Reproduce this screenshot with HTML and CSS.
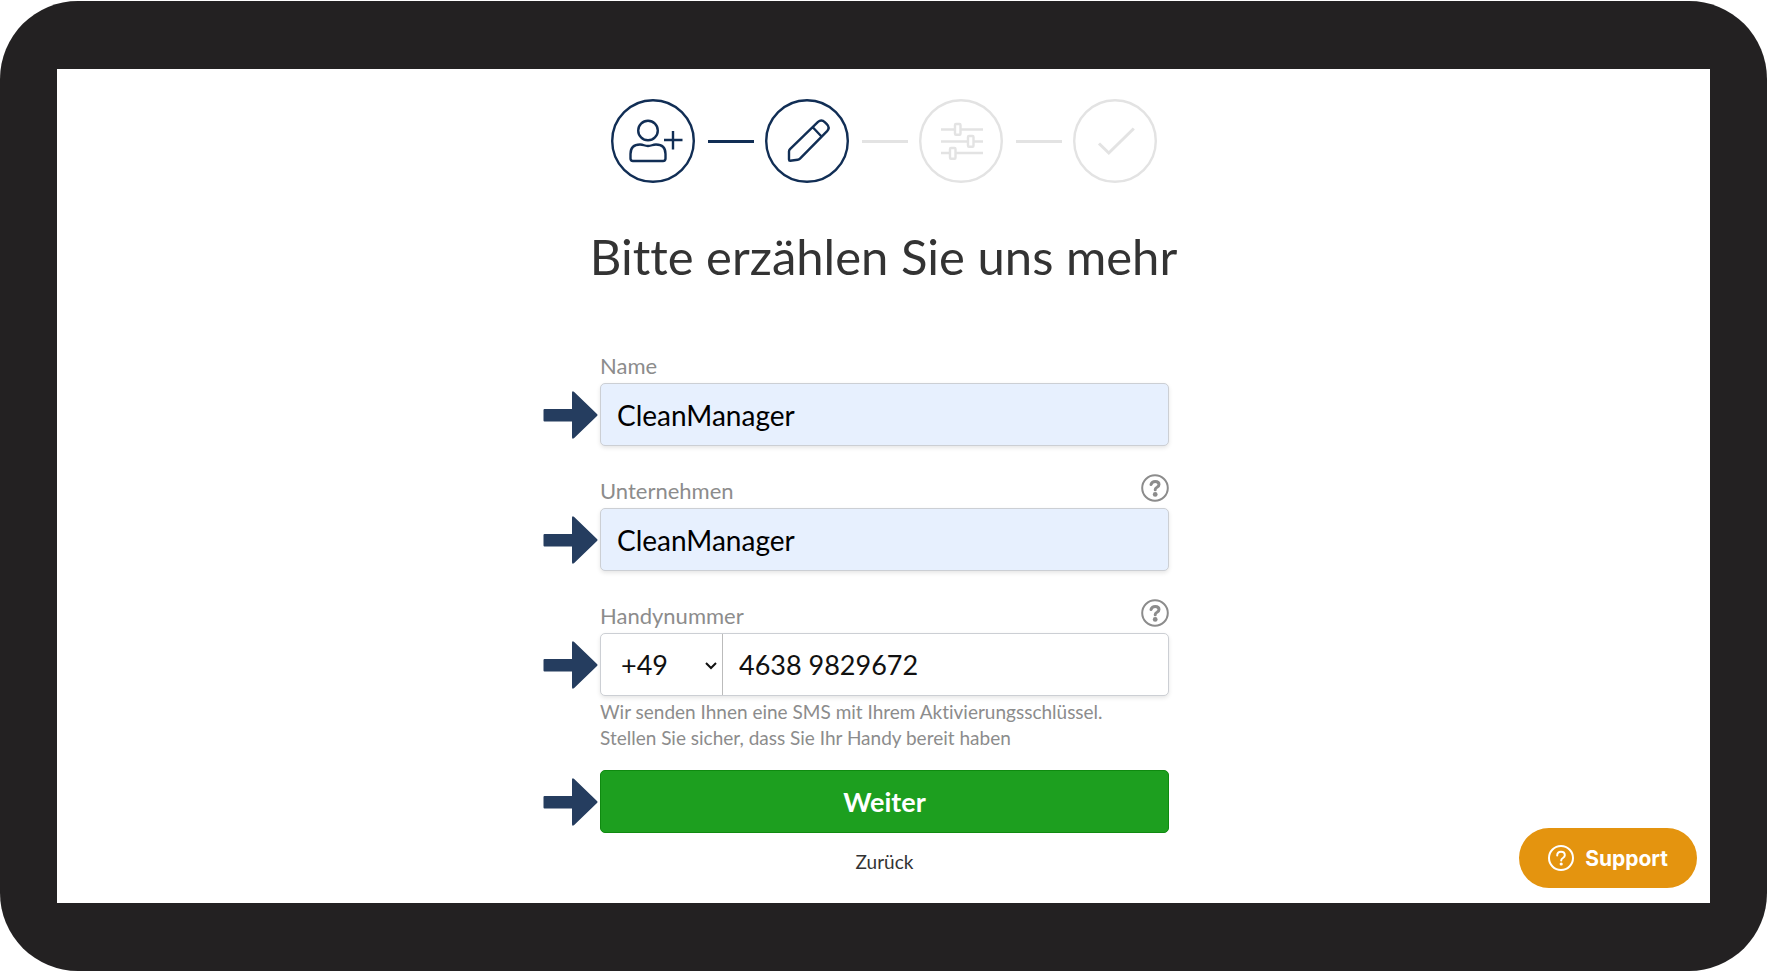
FILE: index.html
```html
<!DOCTYPE html>
<html lang="de">
<head>
    <meta charset="UTF-8">
    <meta name="viewport" content="width=device-width, initial-scale=1.0">
    <title>CleanManager</title>
    <link rel="stylesheet" href="styles.css">
</head>
<body>
    <div class="device">
        <main class="screen">
            <!-- Progress steps -->
            <ol class="steps">
                <li class="step done">
                    <svg viewBox="0 0 84 84" stroke-width="2.4" aria-hidden="true">
                        <circle cx="42" cy="42" r="40.800"/>
                        <circle cx="37" cy="31.500" r="9.800"/>
                        <path d="M22 62q-2.500 0-2.500-2.500v-4.500q0-9.500 9.500-9.500c4 0 4 1.500 8 1.500s4-1.500 8-1.500q9.500 0 9.500 9.500v4.500q0 2.500-2.500 2.500z"/>
                        <path d="M62 32v18.500M53 41h18.500"/>
                    </svg>
                </li>
                <li class="line done"></li>
                <li class="step done">
                    <svg viewBox="0 0 84 84" stroke-width="2.4" aria-hidden="true">
                        <circle cx="42" cy="42" r="40.800"/>
                        <path d="M24 60.500v-8q0-1.300 1-2.300L53 22.800q3.500-3 7 .5l1.800 1.800q3.500 3.500.3 7L35 59.700q-1 1-2.300 1.100l-7.500 1q-1.200 0-1.200-1.300zM48 28.500l8.500 9"/>
                    </svg>
                </li>
                <li class="line"></li>
                <li class="step">
                    <svg viewBox="0 0 84 84" stroke-width="2.4" aria-hidden="true">
                        <circle cx="42" cy="42" r="40.800"/>
                        <path d="M22 30.500h14M42 30.500h22M22 42.500h27M55 42.500h9M22 54h8.500M36.500 54h27.500"/>
                        <rect x="36" y="25" width="5.500" height="10.800" rx="1"/>
                        <rect x="49" y="37" width="5.500" height="10.800" rx="1"/>
                        <rect x="31" y="49" width="5.500" height="10.800" rx="1"/>
                    </svg>
                </li>
                <li class="line"></li>
                <li class="step">
                    <svg viewBox="0 0 84 84" stroke-width="2.4" aria-hidden="true">
                        <circle cx="42" cy="42" r="40.800"/>
                        <path class="check" d="M26 44.500l9.800 9.500 25-24.500"/>
                    </svg>
                </li>
            </ol>

            <h1>Bitte erzählen Sie uns mehr</h1>

            <form class="signup">
                <div class="label-row">
                    <label for="name">Name</label>
                </div>
                <svg class="arrow" viewBox="0 0 55 48" aria-hidden="true"><path d="M1.500 18h27.500V2q0-3 2.200-1L54 23q1 1 0 2L31.200 47q-2.200 2-2.200-1V30.500H1.500q-1 0-1-1V19q0-1 1-1z"/></svg>
                <input class="field filled" type="text" id="name" value="CleanManager">

                <div class="label-row">
                    <label for="company">Unternehmen</label>
                    <button class="help" type="button" aria-label="Hilfe zu Unternehmen">
                        <svg viewBox="0 0 28 28" aria-hidden="true"><circle cx="14" cy="14" r="12.800"/><path d="M10 10.500q1-3 4.200-3 3.800 0 3.800 3 0 1.600-2 2.800-1.800 1-1.800 2.400"/><circle class="dot" cx="14.200" cy="20.400" r="2.400"/></svg>
                    </button>
                </div>
                <svg class="arrow" viewBox="0 0 55 48" aria-hidden="true"><path d="M1.500 18h27.500V2q0-3 2.200-1L54 23q1 1 0 2L31.200 47q-2.200 2-2.200-1V30.500H1.500q-1 0-1-1V19q0-1 1-1z"/></svg>
                <input class="field filled" type="text" id="company" value="CleanManager">

                <div class="label-row">
                    <label for="phone">Handynummer</label>
                    <button class="help" type="button" aria-label="Hilfe zu Handynummer">
                        <svg viewBox="0 0 28 28" aria-hidden="true"><circle cx="14" cy="14" r="12.800"/><path d="M10 10.500q1-3 4.200-3 3.800 0 3.800 3 0 1.600-2 2.800-1.800 1-1.800 2.400"/><circle class="dot" cx="14.200" cy="20.400" r="2.400"/></svg>
                    </button>
                </div>
                <svg class="arrow" viewBox="0 0 55 48" aria-hidden="true"><path d="M1.500 18h27.500V2q0-3 2.200-1L54 23q1 1 0 2L31.200 47q-2.200 2-2.200-1V30.500H1.500q-1 0-1-1V19q0-1 1-1z"/></svg>
                <div class="phone">
                    <div class="code">
                        <select id="code" aria-label="Landesvorwahl">
                            <option>+49</option>
                        </select>
                        <svg class="chevron" viewBox="0 0 12 8" aria-hidden="true"><path d="M1 1l5 5 5-5"/></svg>
                    </div>
                    <input class="number" type="tel" id="phone" value="4638 9829672">
                </div>
                <p class="hint">Wir senden Ihnen eine SMS mit Ihrem Aktivierungsschlüssel.<br>Stellen Sie sicher, dass Sie Ihr Handy bereit haben</p>

                <svg class="arrow" viewBox="0 0 55 48" aria-hidden="true"><path d="M1.500 18h27.500V2q0-3 2.200-1L54 23q1 1 0 2L31.200 47q-2.200 2-2.200-1V30.500H1.500q-1 0-1-1V19q0-1 1-1z"/></svg>
                <button class="next" type="submit">Weiter</button>
                <a class="back" href="#">Zurück</a>
            </form>

            <button class="support" type="button">
                <svg viewBox="0 0 28 28" aria-hidden="true"><circle cx="14" cy="14" r="12"/><path d="M10.200 11.500q0-3.700 3.800-3.700t3.800 3.400q0 1.600-1.900 2.800-1.700 1-1.700 2.500"/><circle class="dot" cx="14.200" cy="20" r="1.600"/></svg>
                Support
            </button>
        </main>
    </div>
</body>
</html>
```
FILE: styles.css
```css
* {
    box-sizing: border-box;
}
body {
    margin: 0;
    padding-top: 1px;
    background: #ffffff;
    color: #333333;
    font-family: Lato, sans-serif;
    font-variant-ligatures: none;
}
/* Dark tablet frame around the page */
.device {
    display: flex;
    min-height: calc(100vh - 1px);
    padding: 68px 57px;
    background: #232122;
    border-radius: 78px;
}
.screen {
    position: relative;
    flex: 1;
    display: flex;
    flex-direction: column;
    align-items: center;
    padding: 30px 20px 20px;
    background: #ffffff;
}
.steps {
    display: flex;
    align-items: center;
    gap: 12px;
    margin: 0;
    padding: 0;
    list-style: none;
    color: #e3e3e3;
}
.steps .done {
    color: #112e55;
}
.step svg {
    display: block;
    width: 84px;
    height: 84px;
    fill: none;
    stroke: currentColor;
}
.step .check {
    stroke-width: 3;
}
.line {
    width: 46px;
    margin: 0 -1px 0 1px;
    border-top: 3px solid currentColor;
}
h1 {
    margin: 43px 0 63px;
    font-size: 49px;
    font-weight: 400;
    line-height: 60px;
}

/* Arrow column on the left, nearly the same space on the right keeps the fields centered */
.signup {
    display: grid;
    grid-template-columns: 57px minmax(0, 569px) 55px;
    align-items: center;
}
.label-row,
.hint,
.back {
    grid-column: 2;
}
.label-row {
    display: flex;
    justify-content: space-between;
    align-items: flex-end;
    height: 34px;
    padding-bottom: 4px;
    color: #8c8c8c;
    font-size: 22px;
    line-height: 26px;
}
.field + .label-row {
    height: 62px;
}
.help {
    margin-bottom: 2px;
    padding: 0;
    border: none;
    background: none;
    color: #8c8c8c;
    cursor: pointer;
}
.help svg,
.support svg {
    display: block;
    width: 28px;
    height: 28px;
    fill: none;
    stroke: currentColor;
    stroke-width: 2;
    stroke-linecap: round;
}
.help path {
    stroke-width: 3;
}
.help .dot,
.support .dot {
    fill: currentColor;
    stroke: none;
}
.arrow {
    grid-column: 1;
    width: 55px;
    height: 48px;
    fill: #253d5f;
}
.field,
.phone {
    width: 100%;
    height: 63px;
    border: 1px solid #cccfd4;
    border-radius: 5px;
    background: #ffffff;
    box-shadow: 0 2px 4px rgba(0, 0, 0, 0.1);
}
.field,
.phone input,
.phone select {
    color: #111111;
    font-family: inherit;
    font-size: 27px;
}
.field {
    padding: 0 16px;
    color: #000000;
    font-size: 28px;
}
.filled {
    background: #e7f0fe;
}
.phone {
    display: flex;
}
.code {
    position: relative;
    width: 122px;
    border-right: 1px solid #bbbbbb;
}
.code select {
    width: 100%;
    height: 100%;
    padding: 0 20px;
    border: none;
    background: none;
    appearance: none;
}
.chevron {
    position: absolute;
    top: 28px;
    right: 5px;
    width: 12px;
    height: 8px;
    fill: none;
    stroke: #111111;
    stroke-width: 2;
    pointer-events: none;
}
.number {
    flex: 1;
    min-width: 0;
    padding: 0 16px;
    border: none;
    background: none;
}
.hint {
    margin: 3px 0 19px;
    color: #8c8c8c;
    font-size: 19px;
    line-height: 26px;
}
.next {
    height: 63px;
    border: 1px solid #0f8a10;
    border-radius: 5px;
    background: #1d9f1f;
    color: #ffffff;
    font-family: inherit;
    font-size: 27px;
    font-weight: 700;
    cursor: pointer;
}
.back {
    margin-top: 16px;
    color: #333333;
    font-size: 19px;
    line-height: 26px;
    text-align: center;
    text-decoration: none;
}
/* Floating support button */
.support {
    position: absolute;
    right: 13px;
    bottom: 15px;
    display: flex;
    align-items: center;
    gap: 10px;
    height: 60px;
    padding: 0 29px 0 28px;
    border: none;
    border-radius: 30px;
    background: #e4940f;
    color: #ffffff;
    font-family: Inter, sans-serif;
    font-size: 21px;
    font-weight: 700;
    cursor: pointer;
}
```
